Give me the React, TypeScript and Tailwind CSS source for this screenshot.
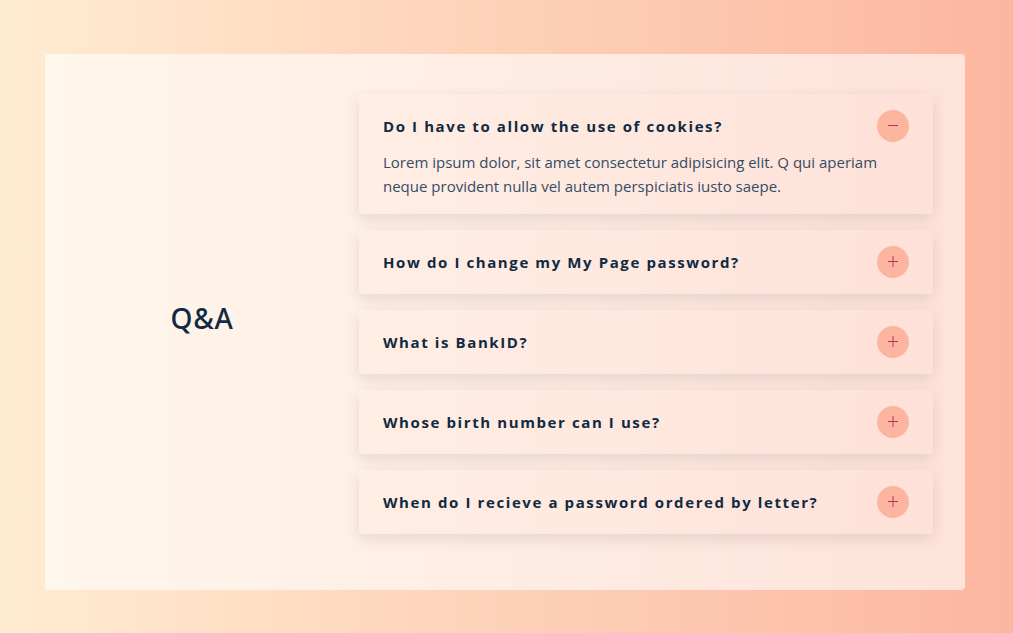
import { useState } from "react";

const ANSWER =
  "Lorem ipsum dolor, sit amet consectetur adipisicing elit. Q qui aperiam neque provident nulla vel autem perspiciatis iusto saepe.";

const questions = [
  "Do I have to allow the use of cookies?",
  "How do I change my My Page password?",
  "What is BankID?",
  "Whose birth number can I use?",
  "When do I recieve a password ordered by letter?",
];

function ToggleIcon({ open }: { open: boolean }) {
  return (
    <svg viewBox="0 0 16 16" className="size-4" stroke="currentColor" strokeWidth="1" aria-hidden="true">
      <path d="M3 7.5H13" />
      {!open && <path d="M8 2V13" />}
    </svg>
  );
}

type QuestionProps = { id: string; title: string; open: boolean; onToggle: () => void };

function Question({ id, title, open, onToggle }: QuestionProps) {
  return (
    <article className="rounded px-6 py-4 shadow-[0_5px_15px_rgba(0,0,0,0.1)] bg-linear-to-r from-[#ffeee4] to-[#fee1d8]">
      <header className="flex items-center justify-between gap-4">
        <h2 id={`${id}-title`} className="text-[15px] leading-6 font-bold tracking-[0.1rem] text-[#102a42]">
          {title}
        </h2>
        <button
          type="button"
          aria-expanded={open}
          aria-labelledby={`${id}-title`}
          onClick={onToggle}
          className="flex size-8 shrink-0 cursor-pointer items-center justify-center rounded-full bg-[#fcb69f] text-[#b4345c]"
        >
          <ToggleIcon open={open} />
        </button>
      </header>
      {open && <p className="mt-2 text-[15px] leading-6 text-[#324d67]">{ANSWER}</p>}
    </article>
  );
}

export default function App() {
  const [openIndex, setOpenIndex] = useState<number | null>(0);

  return (
    <div className="min-h-screen bg-linear-to-r/srgb from-[#ffecd2] to-[#fcb69f] pt-[54px] pr-12 pb-[43px] pl-[45px] font-['Open_Sans','Noto_Sans',sans-serif]">
      <main className="grid items-center gap-8 rounded bg-white/60 px-8 py-10 md:grid-cols-[250px_1fr]">
        <h1 className="mb-2 text-center font-['Noto_Sans','Open_Sans',sans-serif] text-[28px] font-medium tracking-wide text-[#102a42]">
          Q&amp;A
        </h1>
        <section className="flex flex-col gap-4 pb-4">
          {questions.map((title, i) => (
            <Question
              key={title}
              id={`question-${i}`}
              title={title}
              open={openIndex === i}
              onToggle={() => setOpenIndex(openIndex === i ? null : i)}
            />
          ))}
        </section>
      </main>
    </div>
  );
}
